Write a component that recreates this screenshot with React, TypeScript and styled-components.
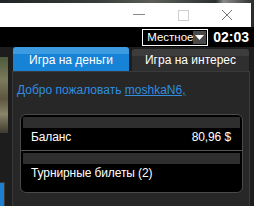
import React from "react";
import styled, { createGlobalStyle } from "styled-components";

const GlobalStyle = createGlobalStyle`
  html, body {
    margin: 0;
    padding: 0;
    background: #1b1b1b;
    overflow: hidden;
  }
  * {
    box-sizing: border-box;
  }
`;

const Screen = styled.div`
  width: 254px;
  height: 206px;
  display: flex;
  flex-direction: column;
  background: #1d1d1d;
  font-family: "Liberation Sans", Arial, sans-serif;
  overflow: hidden;
`;

const DesktopEdge = styled.div`
  height: 3px;
  background: linear-gradient(90deg, #1f2426, #3a3f3c 40%, #5b5e58 60%, #2c3032 85%, #8a8a88 88%, #2a2d2e);
`;

const TitleRow = styled.div`
  display: flex;
  height: 24px;
  background: #2a2d2e;
`;

const TitleBar = styled.div`
  flex: 1;
  background: #ffffff;
  display: flex;
  justify-content: flex-end;
  align-items: center;
  padding-right: 16px;
  gap: 28px;
`;

const WinButton = styled.div`
  width: 16px;
  height: 16px;
  display: flex;
  align-items: center;
  justify-content: center;
`;

const DesktopRight = styled.div`
  width: 3px;
`;

const HeaderBar = styled.div`
  height: 20px;
  background: #000;
  display: flex;
  align-items: center;
  justify-content: flex-end;
  padding-right: 5px;
  gap: 5px;
`;

const Select = styled.div`
  width: 66px;
  height: 17px;
  border: 1px solid #fff;
  display: flex;
  align-items: center;
  justify-content: space-between;
  padding: 0 1px 0 4px;
  color: #fff;
  font-size: 11.5px;
  line-height: 15px;
`;

const Arrow = styled.div`
  width: 15px;
  height: 13px;
  background: #4a4a4a;
  display: flex;
  align-items: center;
  justify-content: center;
`;

const Clock = styled.div`
  color: #fff;
  font-weight: bold;
  font-size: 14px;
`;

const Body = styled.div`
  flex: 1;
  display: flex;
`;

const SideStrip = styled.div`
  width: 12px;
  display: flex;
  flex-direction: column;
  background: #1d1d1d;
`;

const Photo = styled.div`
  margin-top: 10px;
  width: 8px;
  height: 76px;
  background: linear-gradient(180deg, #4c5a3c, #7d7a5c 30%, #5d5540 55%, #8a8468 75%, #3c3a30);
`;

const SideBlue = styled.div`
  margin-top: auto;
  width: 5px;
  height: 24px;
  border-top: 1px solid #3a3a3a;
  border-right: 1px solid #3a3a3a;
  background: #1c7fd0;
`;

const Main = styled.div`
  flex: 1;
  display: flex;
  flex-direction: column;
  margin-right: 4px;
`;

const Tabs = styled.div`
  display: flex;
  align-items: flex-end;
  gap: 3px;
  padding-left: 1px;
  height: 24px;
`;

const Tab = styled.div<{ $active?: boolean }>`
  width: ${(p) => (p.$active ? "116px" : "117px")};
  height: ${(p) => (p.$active ? "24px" : "22px")};
  border-radius: 3px 3px 0 0;
  display: flex;
  align-items: center;
  justify-content: center;
  padding-top: ${(p) => (p.$active ? "1px" : "0")};
  color: #fff;
  font-size: 12px;
  background: ${(p) =>
    p.$active
      ? "linear-gradient(180deg, #3d9be2 0, #3d9be2 7px, #1683d6 7px)"
      : "linear-gradient(180deg, #3c3c3c 0, #3c3c3c 7px, #2f2f2f 7px)"};
`;

const Panel = styled.div`
  flex: 1;
  background: #272727;
  border: 1px solid #3a3a3a;
  border-bottom: none;
  padding: 9px 6px 0 4px;
`;

const Welcome = styled.div`
  color: #2f8ee0;
  font-size: 12px;
  line-height: 18px;
  height: 18px;
`;

const Link = styled.span`
  text-decoration: underline;
`;

const Card = styled.div`
  margin-top: 15px;
  margin-left: 3px;
  width: 223px;
  height: 79px;
  background: #000;
  border: 1px solid #4a4a4a;
  border-radius: 6px;
  padding: 2px 2px 0;
  display: flex;
  flex-direction: column;
`;

const Strip = styled.div`
  height: 11px;
  background: #2e2e2e;
`;

const Row = styled.div`
  display: flex;
  justify-content: space-between;
  color: #fff;
  font-size: 12px;
  line-height: 16px;
  letter-spacing: -0.1px;
  padding: 1px 9px 0 8px;
  height: 22px;
`;

const Divider = styled.div`
  height: 1px;
  background: #555;
  margin: 0 -2px 2px;
`;

export default function App() {
  return (
    <>
      <GlobalStyle />
      <Screen>
        <DesktopEdge />
        <TitleRow>
          <TitleBar>
            <WinButton>
              <svg width="12" height="2" viewBox="0 0 12 2">
                <rect x="0" y="0" width="12" height="1" fill="#8a8a8a" />
              </svg>
            </WinButton>
            <WinButton>
              <svg width="11" height="11" viewBox="0 0 11 11">
                <rect x="0.5" y="0.5" width="10" height="10" fill="none" stroke="#cfcfcf" />
              </svg>
            </WinButton>
            <WinButton>
              <svg width="12" height="12" viewBox="0 0 12 12">
                <path d="M1 1 L11 11 M11 1 L1 11" stroke="#777" strokeWidth="1" />
              </svg>
            </WinButton>
          </TitleBar>
          <DesktopRight />
        </TitleRow>
        <HeaderBar>
          <Select>
            <span>Местное</span>
            <Arrow>
              <svg width="9" height="5" viewBox="0 0 9 5">
                <path d="M0 0 H9 L4.5 5 Z" fill="#fff" />
              </svg>
            </Arrow>
          </Select>
          <Clock>02:03</Clock>
        </HeaderBar>
        <Body>
          <SideStrip>
            <Photo />
            <SideBlue />
          </SideStrip>
          <Main>
            <Tabs>
              <Tab $active>Игра на деньги</Tab>
              <Tab>Игра на интерес</Tab>
            </Tabs>
            <Panel>
              <Welcome>
                Добро пожаловать <Link>moshkaN6,</Link>
              </Welcome>
              <Card>
                <Strip />
                <Row>
                  <span>Баланс</span>
                  <span>80,96 $</span>
                </Row>
                <Divider />
                <Strip />
                <Row>
                  <span>Турнирные билеты (2)</span>
                </Row>
              </Card>
            </Panel>
          </Main>
        </Body>
      </Screen>
    </>
  );
}
